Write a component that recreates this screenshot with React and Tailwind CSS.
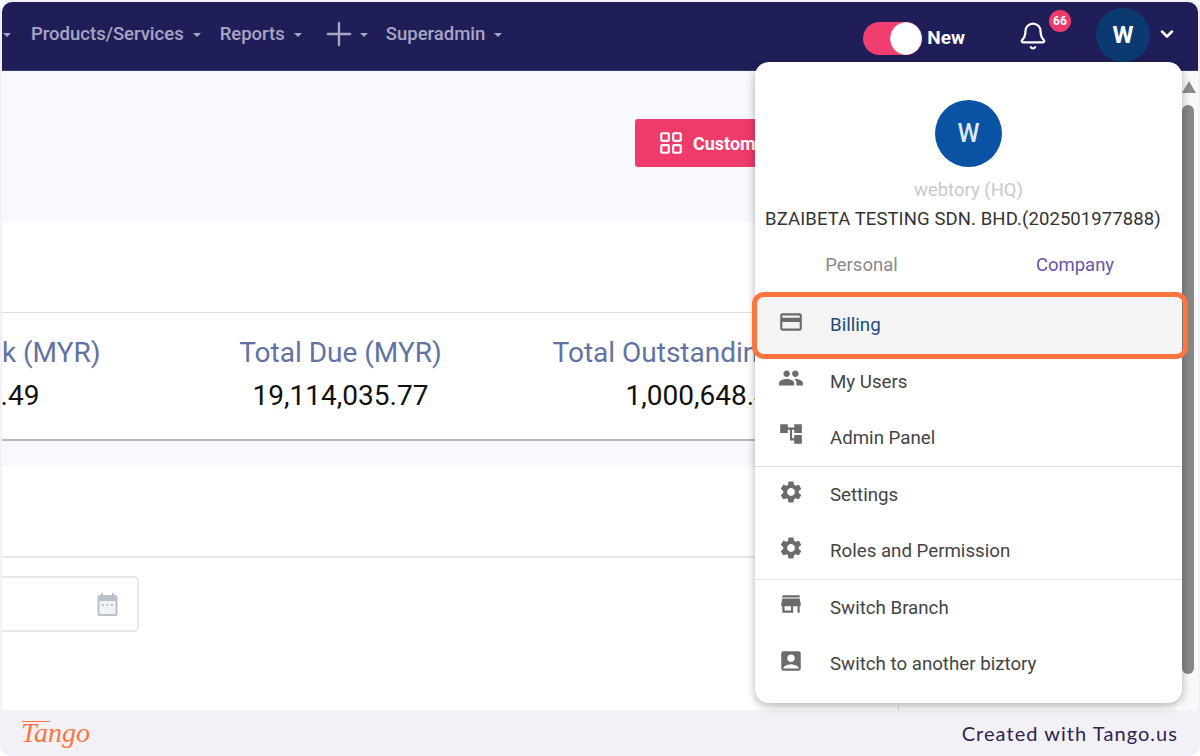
import React from 'react';
import { ChevronDown, Bell, Plus, LayoutGrid } from 'lucide-react';
import { MdPayment, MdPeople, MdAccountTree, MdSettings, MdStore, MdAccountBox } from 'react-icons/md';

const menuGroups = [
  [
    { label: 'Billing', icon: MdPayment, height: 'h-[57px]', active: true },
    { label: 'My Users', icon: MdPeople, height: 'h-[56px]' },
    { label: 'Admin Panel', icon: MdAccountTree, height: 'h-[56px]' },
  ],
  [
    { label: 'Settings', icon: MdSettings, height: 'h-[57px]' },
    { label: 'Roles and Permission', icon: MdSettings, height: 'h-[55px]' },
  ],
  [
    { label: 'Switch Branch', icon: MdStore, height: 'h-[56px]' },
    { label: 'Switch to another biztory', icon: MdAccountBox, height: 'h-[57px]' },
  ],
];

const stats = [
  { label: 'Total Cash/ Bank (MYR)', value: '21,306,412.49', width: 'w-[417px]' },
  { label: 'Total Due (MYR)', value: '19,114,035.77', width: 'w-[361px]' },
  { label: 'Total Outstanding (MYR)', value: '1,000,648.40', width: 'w-[369px]' },
];

function Caret({ className = 'ml-[9px]' }) {
  return <span className={`${className} mt-[1px] h-0 w-0 border-x-[4px] border-t-[4px] border-x-transparent border-t-[#a7a6c4]`} />;
}

function Navbar() {
  return (
    <div className="flex h-[69px] shrink-0 items-center overflow-hidden rounded-t-[10px] border-b border-[#3a3870] bg-[#201e58] pb-[4px] pl-[1px] font-['Roboto',sans-serif] text-[18.5px] font-medium text-[#a7a6c4]">
      <Caret className="ml-0" />
      <span className="ml-[20px] mt-[1px]">Products/Services</span>
      <Caret />
      <span className="ml-[19px] mt-[1px]">Reports</span>
      <Caret />
      <Plus className="ml-[18px] h-[38px] w-[38px] shrink-0 text-[#a7a6c4]" strokeWidth={1.5} />
      <Caret className="ml-[2px]" />
      <span className="ml-[18px] mt-[1px]">Superadmin</span>
      <Caret />
      <div className="ml-[361px] mt-[8px] flex items-center">
        <div className="flex h-[33px] w-[59px] justify-end rounded-full bg-[#f03f6e]">
          <div className="h-[33px] w-[32px] rounded-full border border-[#f3d5dd] bg-white" />
        </div>
        <span className="ml-[5px] text-[19px] font-bold text-white">New</span>
      </div>
      <div className="relative ml-[53px] mt-[4px]">
        <Bell className="h-[30px] w-[30px] text-white" strokeWidth={1.8} />
        <span className="absolute -right-[23px] -top-[11px] flex h-[22px] w-[22px] items-center justify-center rounded-full bg-[#ee3a6a] text-[12px] font-bold text-white">66</span>
      </div>
      <div className="ml-[48px] mt-[2px] flex h-[54px] w-[54px] shrink-0 items-center justify-center rounded-full bg-[#0a3a70] text-[24px] font-bold text-white">W</div>
      <ChevronDown className="ml-[7px] h-[20px] w-[20px] shrink-0 text-white" strokeWidth={3} />
    </div>
  );
}

function StatColumn({ stat }) {
  return (
    <div className={`flex shrink-0 flex-col items-center ${stat.width}`}>
      <div className="whitespace-nowrap text-[28px] leading-[32px] text-[#6172a3]">{stat.label}</div>
      <div className="mt-[11px] whitespace-nowrap text-[28px] leading-[32px] text-[#111]">{stat.value}</div>
    </div>
  );
}

function CalendarIcon() {
  return (
    <svg width="21" height="23" viewBox="0 0 21 23" className="text-[#b9c0cb]">
      <rect x="0.5" y="2" width="20" height="21" rx="2" fill="currentColor" />
      <rect x="2.5" y="8" width="16" height="13" fill="#eef3fa" />
      <rect x="4" y="0" width="2" height="4" fill="currentColor" />
      <rect x="15" y="0" width="2" height="4" fill="currentColor" />
      <rect x="5" y="11" width="2" height="2" fill="currentColor" />
      <rect x="9.5" y="11" width="2" height="2" fill="currentColor" />
      <rect x="14" y="11" width="2" height="2" fill="currentColor" />
    </svg>
  );
}

function MainContent() {
  return (
    <div className="flex-1 overflow-hidden bg-white font-['Roboto',sans-serif]">
      <div className="flex h-[151px] bg-[#f8f9fd] pl-[633px] pt-[48px]">
        <button className="flex h-[48px] w-[170px] items-center rounded-[3px] bg-[#ef3b6a] pl-[23px] text-[18px] font-bold text-white">
          <LayoutGrid className="mr-[9px] h-[26px] w-[26px]" strokeWidth={2} />
          Customize
        </button>
      </div>
      <div className="h-[219px] border-b-2 border-[#b8b8bc] bg-white">
        <div className="h-[91px] border-b border-[#dfdfe2]" />
        <div className="ml-[-259px] flex pt-[24px]">
          {stats.map((s) => (
            <StatColumn key={s.label} stat={s} />
          ))}
        </div>
      </div>
      <div className="h-[26px] bg-[#f8f9fd]" />
      <div className="h-[243px] w-[897px] border-r border-[#dedee0]">
        <div className="h-[91px] border-b-2 border-[#e8e8e8]" />
        <div className="mt-[18px] flex h-[56px] w-[137px] items-center justify-end rounded-r-[5px] border-2 border-l-0 border-[#e8e8e8] pr-[19px]">
          <CalendarIcon />
        </div>
      </div>
    </div>
  );
}

function Scrollbar() {
  return (
    <div className="flex w-[16px] shrink-0 flex-col bg-[#f8f9fa]">
      <div className="mt-[10px] h-0 w-0 border-x-[7px] border-b-[12px] border-x-transparent border-b-[#8c8c8c]" />
      <div className="mt-[12px] h-[569px] w-[12px] rounded-[6px] bg-[#878787]" />
    </div>
  );
}

function ProfileMenu() {
  return (
    <div className="absolute left-[755px] top-[62px] z-10 h-[641px] w-[427px] rounded-[14px] bg-white font-['Roboto',sans-serif] shadow-[0_3px_10px_rgba(0,0,0,0.3)]">
      <div className="flex flex-col items-center pt-[38px]">
        <div className="flex h-[67px] w-[67px] items-center justify-center rounded-full bg-[#0a52a3] text-[25px] font-medium text-[#dfe8f3]">W</div>
        <div className="mt-[12px] text-[18.5px] leading-[22px] text-[#c9c9c9]">webtory (HQ)</div>
        <div className="mr-[11px] mt-[7px] whitespace-nowrap text-[18.5px] leading-[22px] tracking-[0.1px] text-[#333]">BZAIBETA TESTING SDN. BHD.(202501977888)</div>
      </div>
      <div className="mt-[24px] flex h-[43px] text-[18.5px] leading-[22px]">
        <div className="w-[213px] text-center text-[#8a8a8a]">Personal</div>
        <div className="w-[214px] text-center text-[#6a55a6]">Company</div>
      </div>
      <div>
        {menuGroups.map((group, i) => (
          <div key={i} className="border-b border-[#e3e3e3] last:border-b-0">
            {group.map((item) => (
              <div key={item.label} className={`flex items-center pl-[23px] ${item.height} ${item.active ? 'bg-[#f4f4f4] text-[#1f4a7c]' : 'text-[#444]'}`}>
                <item.icon className="mb-[8px] h-[26px] w-[26px] text-[#6b6b6b]" />
                <span className="ml-[26px] text-[18.7px]">{item.label}</span>
              </div>
            ))}
          </div>
        ))}
      </div>
      <div className="absolute left-[-3px] top-[230px] h-[67px] w-[436px] rounded-[12px] border-[5px] border-[#ff7540]" />
    </div>
  );
}

export default function App() {
  return (
    <div className="relative h-[756px] w-[1200px] overflow-hidden bg-white">
      <div className="flex h-full flex-col rounded-[10px] bg-[#f3f1f7] px-[2px] pt-[2px]">
        <Navbar />
        <div className="flex h-[639px] shrink-0 overflow-hidden">
          <MainContent />
          <Scrollbar />
        </div>
        <div className="flex flex-1 items-center justify-between pl-[19px] pr-[20px]">
          <span className="relative font-['Liberation_Serif',serif] text-[28px] font-normal italic leading-none text-[#ff7540]">
            Tango
            <span className="absolute left-[1px] top-[2px] h-px w-[28px] bg-[#ff7540]" />
          </span>
          <span className="font-['Lato',sans-serif] text-[20px] leading-[24px] tracking-[1.05px] text-[#2e2450]">Created with Tango.us</span>
        </div>
      </div>
      <ProfileMenu />
    </div>
  );
}
